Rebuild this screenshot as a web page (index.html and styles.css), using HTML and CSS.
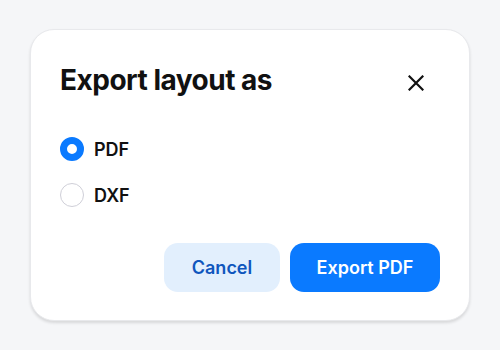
FILE: index.html
```html
<!DOCTYPE html>
<html>
<head>
<meta charset="utf-8">
<link rel="stylesheet" href="styles.css">
</head>
<body>
<div class="dialog">
  <div class="header">
    <h1 class="title">Export layout as</h1>
    <button class="close" aria-label="Close">
      <svg width="16" height="16" viewBox="0 0 16 16"><path d="M1.5 1.5L14.5 14.5M14.5 1.5L1.5 14.5" stroke="#111" stroke-width="2.2" stroke-linecap="square" fill="none"/></svg>
    </button>
  </div>
  <div class="options">
    <label class="option"><span class="radio checked"></span><span class="label">PDF</span></label>
    <label class="option"><span class="radio"></span><span class="label">DXF</span></label>
  </div>
  <div class="actions">
    <button class="btn secondary">Cancel</button>
    <button class="btn primary">Export PDF</button>
  </div>
</div>
</body>
</html>
```
FILE: styles.css
```css
html, body { margin: 0; padding: 0; }
body {
  width: 500px;
  height: 350px;
  background: #f5f6f8;
  font-family: Inter, "Noto Sans", sans-serif;
  padding: 29px 30px;
  box-sizing: border-box;
}
.dialog {
  width: 440px;
  height: 292px;
  box-sizing: border-box;
  background: #fff;
  border-radius: 24px;
  border: 1px solid #e8e9ec;
  box-shadow: 0 2px 3px rgba(0,0,0,0.12);
  padding: 30px 29px 28px 29px;
  display: flex;
  flex-direction: column;
}
.header {
  display: flex;
  align-items: center;
  justify-content: space-between;
  height: 40px;
}
.title {
  margin: 0;
  font-size: 28px;
  font-weight: 700;
  letter-spacing: -0.5px;
  color: #111;
}
.close {
  border: 0;
  background: none;
  padding: 0;
  width: 16px;
  height: 16px;
  margin-right: 16px;
  margin-top: 6px;
  display: flex;
}
.options {
  margin-top: 37px;
  display: flex;
  flex-direction: column;
  gap: 22px;
}
.option {
  display: flex;
  align-items: center;
  gap: 10px;
  height: 24px;
}
.radio {
  width: 24px;
  height: 24px;
  box-sizing: border-box;
  border-radius: 50%;
  border: 1.5px solid #cfcfd8;
  background: #fff;
}
.radio.checked {
  border: 7px solid #0a7aff;
}
.label {
  font-size: 18px;
  font-weight: 600;
  color: #111;
}
.actions {
  margin-top: auto;
  display: flex;
  justify-content: flex-end;
  gap: 10px;
}
.btn {
  height: 49px;
  border: 0;
  border-radius: 14px;
  font-family: Inter, "Noto Sans", sans-serif;
  font-size: 18px;
  font-weight: 600;
}
.secondary {
  width: 116px;
  background: #e2effd;
  color: #0f56bd;
}
.primary {
  width: 150px;
  background: #0a7aff;
  color: #fff;
}
```
